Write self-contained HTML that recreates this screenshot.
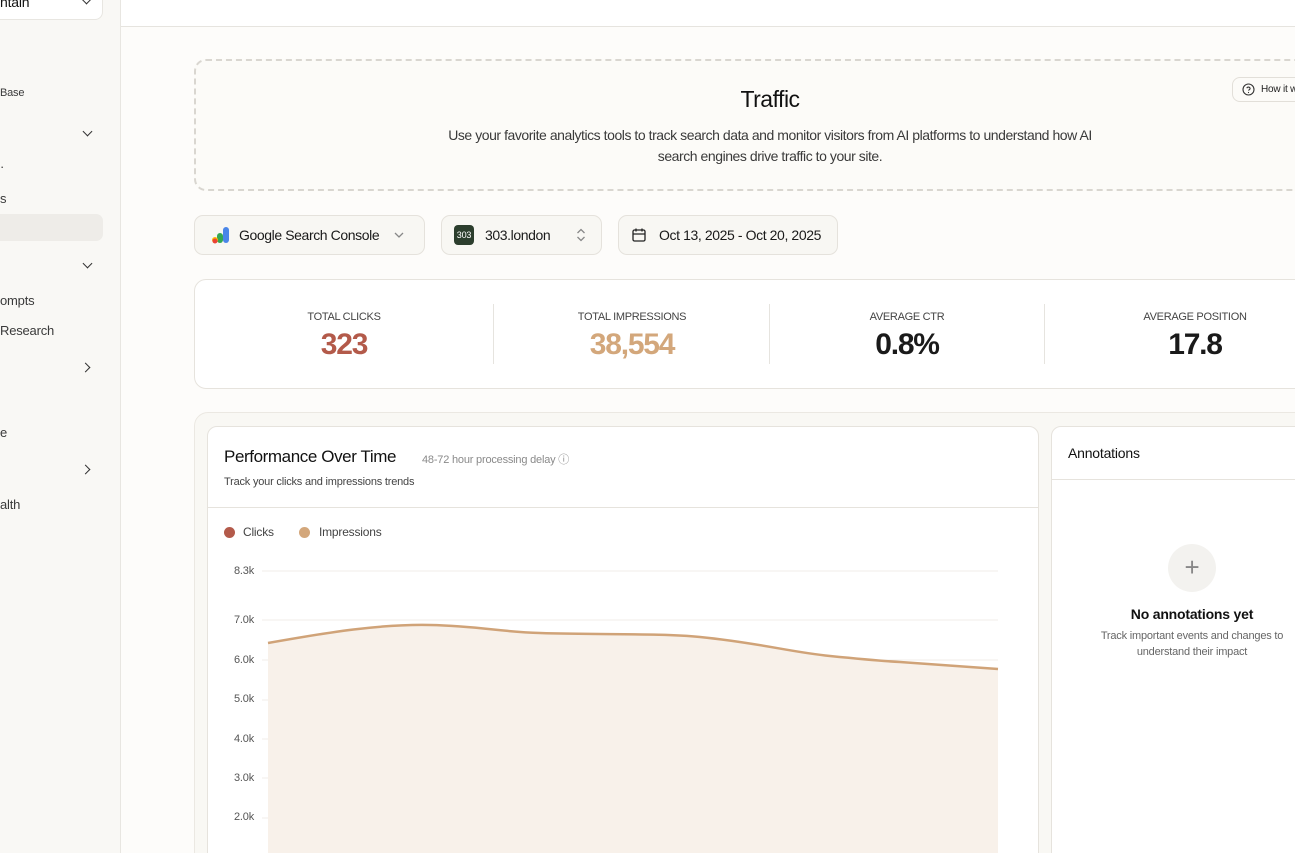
<!DOCTYPE html>
<html><head><meta charset="utf-8"><style>
*{box-sizing:border-box;margin:0;padding:0}
html{width:1295px;height:853px;overflow:hidden}
body{width:1295px;height:853px;overflow:hidden;background:#fdfcfa;font-family:"Liberation Sans",sans-serif;color:#1a1a1a;position:relative;letter-spacing:-.2px}
.abs{position:absolute}
.side{left:0;top:0;width:121px;height:853px;background:#f9f8f5;border-right:1px solid #e8e6e1}
.side .t{position:absolute;font-size:13px;color:#3a3a3a}
.chev{position:absolute;width:7px;height:7px;border-right:1.5px solid #333;border-bottom:1.5px solid #333}
.top{left:121px;top:0;width:1174px;height:27px;background:#fff;border-bottom:1px solid #e6e4df}
.btn{position:absolute;top:215px;height:40px;border:1px solid #e5e2dc;border-radius:9px;background:#f8f7f3;font-size:14px;display:flex;align-items:center;color:#1a1a1a;letter-spacing:-.4px}
.stat{position:absolute;top:311px;text-align:center}
.stat .l{font-size:11px;color:#444;letter-spacing:-.3px}
.stat .v{font-size:30px;font-weight:bold;margin-top:5px;letter-spacing:-1.2px}
.vl{position:absolute;top:304px;width:1px;height:60px;background:#e6e4df}
.yl{position:absolute;left:222px;width:32px;text-align:right;font-size:11px;color:#555}
</style></head><body>
<div class="abs side">
  <div class="abs" style="left:-10px;top:-20px;width:113px;height:40px;border:1px solid #e8e6e1;border-radius:8px;background:#fff"></div>
  <div class="t" style="left:0;top:-6px;font-size:14px;color:#111">ntain</div>
  <div class="chev" style="left:83px;top:-4px;transform:rotate(45deg)"></div>
  <div class="t" style="left:0;top:87px;font-size:11px">Base</div>
  <div class="chev" style="left:84px;top:128px;transform:rotate(45deg)"></div>
  <div class="t" style="left:0;top:159px">·</div>
  <div class="t" style="left:0;top:191px">s</div>
  <div class="abs" style="left:-10px;top:214px;width:113px;height:27px;background:#eeece8;border-radius:7px"></div>
  <div class="chev" style="left:84px;top:260px;transform:rotate(45deg)"></div>
  <div class="t" style="left:0;top:293px">ompts</div>
  <div class="t" style="left:0;top:323px">Research</div>
  <div class="chev" style="left:82px;top:364px;transform:rotate(-45deg)"></div>
  <div class="t" style="left:0;top:425px">e</div>
  <div class="chev" style="left:82px;top:466px;transform:rotate(-45deg)"></div>
  <div class="t" style="left:0;top:497px">alth</div>
</div>
<div class="abs top"></div>

<div class="abs" style="left:194px;top:59px;width:1130px;height:132px;border:2px dashed #d9d6d0;border-radius:12px;background:#fcfbf8"></div>
<div class="abs" style="left:194px;top:86px;width:1152px;text-align:center;font-size:23px;color:#111;letter-spacing:-.5px">Traffic</div>
<div class="abs" style="left:435px;top:125px;width:670px;text-align:center;font-size:14px;line-height:21px;color:#3a3a3a;letter-spacing:-.45px">Use your favorite analytics tools to track search data and monitor visitors from AI platforms to understand how AI search engines drive traffic to your site.</div>
<div class="abs" style="left:1232px;top:77px;width:90px;height:25px;border:1px solid #e2dfd9;border-radius:8px;background:#fcfbf8;font-size:10px;padding:6px 0 0 28px;color:#222">How it works</div>
<svg class="abs" style="left:1242px;top:83px" width="13" height="13" viewBox="0 0 13 13"><circle cx="6.5" cy="6.5" r="5.5" fill="none" stroke="#333" stroke-width="1.1"/><path d="M4.8 5.2a1.7 1.7 0 0 1 3.3.4c0 1-1.5 1.2-1.5 2" fill="none" stroke="#333" stroke-width="1.1"/><circle cx="6.5" cy="9.5" r=".6" fill="#333"/></svg>

<div class="btn" style="left:194px;width:231px;padding-left:44px">Google Search Console</div>
<svg class="abs" style="left:211px;top:225px" width="20" height="20" viewBox="0 0 20 20"><rect x="12" y="2" width="6" height="16" rx="3" fill="#4a86e8"/><rect x="6" y="8" width="6" height="10" rx="3" fill="#34a853"/><rect x="1" y="12" width="6" height="6" rx="3" fill="#fbbc05"/><circle cx="4" cy="16" r="2.5" fill="#ea4335"/></svg>
<svg class="abs" style="left:393px;top:230px" width="12" height="10"><path d="M2 3l4 4 4-4" fill="none" stroke="#888" stroke-width="1.3"/></svg>
<div class="btn" style="left:441px;width:161px;padding-left:43px">303.london</div>
<div class="abs" style="left:454px;top:225px;width:20px;height:20px;border-radius:4px;background:#2c3e2d;color:#fff;font-size:9px;text-align:center;line-height:20px">303</div>
<svg class="abs" style="left:575px;top:227px" width="12" height="16"><path d="M2.5 6l3.5-3.5L9.5 6M2.5 10l3.5 3.5L9.5 10" fill="none" stroke="#888" stroke-width="1.3"/></svg>
<div class="btn" style="left:618px;width:220px;padding-left:40px">Oct 13, 2025 - Oct 20, 2025</div>
<svg class="abs" style="left:631px;top:227px" width="16" height="16" viewBox="0 0 16 16"><rect x="2" y="3" width="12" height="11" rx="1.5" fill="none" stroke="#222" stroke-width="1.3"/><path d="M2 7h12M5 1.5v3M11 1.5v3" stroke="#222" stroke-width="1.3"/></svg>

<div class="abs" style="left:194px;top:279px;width:1130px;height:110px;border:1px solid #e6e3dd;border-radius:12px;background:#fff"></div>
<div class="stat" style="left:244px;width:200px"><div class="l">TOTAL CLICKS</div><div class="v" style="color:#b35a4a">323</div></div>
<div class="vl" style="left:493px"></div>
<div class="stat" style="left:532px;width:200px"><div class="l">TOTAL IMPRESSIONS</div><div class="v" style="color:#d3a77b">38,554</div></div>
<div class="vl" style="left:769px"></div>
<div class="stat" style="left:807px;width:200px"><div class="l">AVERAGE CTR</div><div class="v">0.8%</div></div>
<div class="vl" style="left:1044px"></div>
<div class="stat" style="left:1095px;width:200px"><div class="l">AVERAGE POSITION</div><div class="v">17.8</div></div>

<div class="abs" style="left:194px;top:412px;width:1130px;height:460px;border:1px solid #ebe8e2;border-radius:14px;background:#f9f8f4"></div>
<div class="abs" style="left:207px;top:426px;width:832px;height:440px;border:1px solid #e6e3dd;border-radius:10px;background:#fff"></div>
<div class="abs" style="left:224px;top:447px;font-size:17px;color:#111;letter-spacing:-.4px">Performance Over Time</div>
<div class="abs" style="left:422px;top:451px;font-size:11px;color:#8a8a8a">48-72 hour processing delay ⓘ</div>
<div class="abs" style="left:224px;top:476px;font-size:11px;color:#444">Track your clicks and impressions trends</div>
<div class="abs" style="left:208px;top:507px;width:830px;height:1px;background:#e6e3dd"></div>
<div class="abs" style="left:224px;top:527px;width:11px;height:11px;border-radius:50%;background:#b35a4a"></div>
<div class="abs" style="left:243px;top:525px;font-size:12px;color:#444">Clicks</div>
<div class="abs" style="left:299px;top:527px;width:11px;height:11px;border-radius:50%;background:#d3a77b"></div>
<div class="abs" style="left:319px;top:525px;font-size:12px;color:#444">Impressions</div>
<div class="yl" style="top:565px">8.3k</div><div class="yl" style="top:614px">7.0k</div><div class="yl" style="top:654px">6.0k</div><div class="yl" style="top:693px">5.0k</div><div class="yl" style="top:733px">4.0k</div><div class="yl" style="top:772px">3.0k</div><div class="yl" style="top:811px">2.0k</div>
<svg class="abs" style="left:0;top:0" width="1295" height="853">
<g stroke="#f0eeea" stroke-width="1"><path d="M262 571H998M262 620H998M262 660H998M262 700H998M262 739H998M262 778H998M262 818H998"/></g>
<path d="M268 643C330 632 380 624 430 625C480 626 500 632 540 633C600 635 660 633 700 637C760 643 790 652 830 656C860 659 880 661 900 662C940 665 970 667 998 669L998 853L268 853Z" fill="#f8f1ea"/>
<path d="M268 643C330 632 380 624 430 625C480 626 500 632 540 633C600 635 660 633 700 637C760 643 790 652 830 656C860 659 880 661 900 662C940 665 970 667 998 669" fill="none" stroke="#d0a378" stroke-width="2.5"/>
</svg>

<div class="abs" style="left:1051px;top:426px;width:280px;height:440px;border:1px solid #e6e3dd;border-radius:10px;background:#fff"></div>
<div class="abs" style="left:1068px;top:445px;font-size:14px;color:#111">Annotations</div>
<div class="abs" style="left:1052px;top:479px;width:260px;height:1px;background:#e6e3dd"></div>
<div class="abs" style="left:1168px;top:544px;width:48px;height:48px;border-radius:50%;background:#f3f2ef;color:#888;font-size:26px;text-align:center;line-height:46px">+</div>
<div class="abs" style="left:1072px;top:606px;width:240px;text-align:center;font-size:14px;font-weight:bold;color:#111">No annotations yet</div>
<div class="abs" style="left:1082px;top:628px;width:220px;text-align:center;font-size:11px;line-height:16px;color:#666">Track important events and changes to understand their impact</div>
</body></html>
